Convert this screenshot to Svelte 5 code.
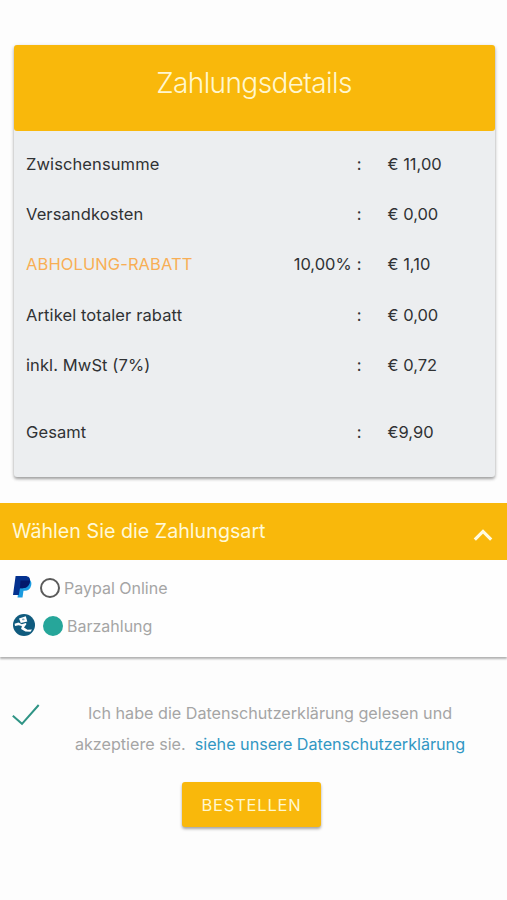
<script lang="ts">
	type Row = { label: string; percent?: string; amount: string; kind?: 'discount' | 'total' };

	const rows: Row[] = [
		{ label: 'Zwischensumme', amount: '€ 11,00' },
		{ label: 'Versandkosten', amount: '€ 0,00' },
		{ label: 'ABHOLUNG-RABATT', percent: '10,00%', amount: '€ 1,10', kind: 'discount' },
		{ label: 'Artikel totaler rabatt', amount: '€ 0,00' },
		{ label: 'inkl. MwSt (7%)', amount: '€ 0,72' },
		{ label: 'Gesamt', amount: '€9,90', kind: 'total' }
	];

	let open = $state(true);
	let method = $state('cash');
	let accepted = $state(true);
</script>

<main>
	<section class="card">
		<h1>Zahlungsdetails</h1>
		<div class="rows">
			{#each rows as row (row.label)}
				<div class="row {row.kind ?? ''}">
					<span class="label">{row.label}</span>
					<span class="percent">{row.percent ?? ''}<span class="colon">:</span></span>
					<span class="amount">{row.amount}</span>
				</div>
			{/each}
		</div>
	</section>

	<section class="payment">
		<button class="payment-header" onclick={() => (open = !open)}>
			<span>Wählen Sie die Zahlungsart</span>
			<svg class="chevron" class:closed={!open} width="20" height="14" viewBox="0 0 20 14">
				<path d="M1.8 11.6 10 3.4l8.2 8.2" fill="none" stroke="#fffbe0" stroke-width="3.2" />
			</svg>
		</button>
		{#if open}
			<div class="methods">
				<button class="method" onclick={() => (method = 'paypal')}>
					<svg width="19" height="22" viewBox="0 0 19 22">
						<path d="M7 4h9.800c1.500 1.200 1.900 3 1.400 5.200-.8 3.800-3.200 5.600-6.400 5.600h-1.300L9.500 21.500H4.500z" fill="#1a9be0" />
						<path d="M2.600 0h9.400c3.800 0 5.600 2.100 5 5.600-.8 4.600-3.600 6.600-7.500 6.600H7L5.800 19H0z" fill="#04318f" />
						<path d="M7.500 4.500h9.600c-.5 5.200-3.500 7.700-7.600 7.700H7L7.500 4.500z" fill="#03186b" />
					</svg>
					<span class="radio" class:selected={method === 'paypal'}></span>
					<span>Paypal Online</span>
				</button>
				<button class="method" onclick={() => (method = 'cash')}>
					<svg width="22" height="22" viewBox="0 0 22 22">
						<circle cx="11" cy="11" r="11" fill="#105b7e" />
						<path d="M6 4.500 12.800 2.200l1.500 5.300-6.500 1.400z" fill="#fff" />
						<ellipse cx="10.300" cy="5.400" rx="1.300" ry=".9" fill="#7fa9bd" />
						<path d="m1.600 9.800 3.900-1.300 3.300 1.700 4-1.300.7 1.100-2.500 3.600 3.500 2.100 4.500-.2-1.500 2.200-5.100-.1-4.300-2.700.8-2.800-3.400-.8-3.500.6z" fill="#fff" />
					</svg>
					<span class="radio" class:selected={method === 'cash'}></span>
					<span>Barzahlung</span>
				</button>
			</div>
		{/if}
	</section>

	<section class="consent">
		<button class="check" aria-label="Datenschutzerklärung" onclick={() => (accepted = !accepted)}>
			{#if accepted}
				<svg width="28" height="22" viewBox="0 0 28 22">
					<path d="m.8 11.800 9.200 8L26.700 1" fill="none" stroke="#2f9485" stroke-width="2" />
				</svg>
			{/if}
		</button>
		<p>
			Ich habe die Datenschutzerklärung gelesen und<br />
			akzeptiere sie.&nbsp; <a href="#datenschutz">siehe unsere Datenschutzerklärung</a>
		</p>
	</section>

	<button class="submit">BESTELLEN</button>
</main>

<style>
	:global(body) {
		margin: 0;
		background: #fdfdfd;
	}

	main {
		display: flex;
		flex-direction: column;
		box-sizing: border-box;
		height: 900px;
		padding-top: 45px;
		overflow: hidden;
		font-family: Inter, 'Liberation Sans', sans-serif;
		font-size: 16.5px;
		color: #303234;
	}

	button {
		padding: 0;
		border: 0;
		background: none;
		font: inherit;
		color: inherit;
		text-align: left;
		cursor: pointer;
	}

	svg {
		display: block;
		flex-shrink: 0;
	}

	.card {
		height: 432px;
		margin: 0 12.5px 0 13.5px;
		border-radius: 3px;
		background: #eceef0;
		box-shadow: 0 2px 3px rgba(0, 0, 0, 0.32), 0 1px 5px rgba(0, 0, 0, 0.1);
	}

	h1 {
		height: 86px;
		margin: 0;
		border-radius: 3px;
		background: #f9b80b;
		color: #fff7cf;
		font-size: 28px;
		font-weight: 300;
		letter-spacing: -0.6px;
		line-height: 77px;
		text-align: center;
	}

	.rows {
		padding: 8px 0 0 12.5px;
	}

	.row {
		display: grid;
		grid-template-columns: 200px 1fr 107px;
		align-items: center;
		height: 50.2px;
	}

	.label {
		letter-spacing: 0.1px;
	}

	.percent {
		padding-right: 26px;
		text-align: right;
	}

	.colon {
		margin-left: 5px;
	}

	.discount .label {
		color: #f8ae55;
	}

	.total {
		margin-top: 16.5px;
	}

	.payment {
		margin-top: 26px;
		box-shadow: 0 2px 2px rgba(0, 0, 0, 0.3);
	}

	.payment-header {
		display: flex;
		align-items: center;
		justify-content: space-between;
		box-sizing: border-box;
		width: 100%;
		height: 57px;
		padding: 0 14.5px 0 12px;
		background: #f9b80b;
		color: #fff9d8;
		font-size: 19.7px;
	}

	.payment-header span {
		margin-bottom: 1px;
	}

	.chevron {
		margin-top: 7px;
	}

	.chevron.closed {
		transform: rotate(180deg);
	}

	.methods {
		display: flex;
		flex-direction: column;
		box-sizing: border-box;
		height: 97px;
		padding: 9px 13px;
		background: #fefefe;
	}

	.method {
		display: flex;
		align-items: center;
		height: 38px;
		color: #a5a5a5;
		font-size: 16px;
	}

	.method svg {
		margin-bottom: 3px;
	}

	.radio {
		box-sizing: border-box;
		width: 20px;
		height: 20px;
		margin: 0 4px 0 8px;
		border: 2px solid #5a5a5a;
		border-radius: 50%;
	}

	.radio.selected {
		border-color: #26a69a;
		background: #26a69a;
	}

	.consent {
		display: flex;
		margin-top: 41px;
	}

	.check {
		width: 30px;
		height: 22px;
		margin: 6px 0 0 12px;
	}

	p {
		flex: 1;
		margin: 0 9px 0 0;
		color: #a5a5a5;
		font-size: 16.15px;
		line-height: 30.5px;
		text-align: center;
	}

	a {
		color: #3197c3;
		text-decoration: none;
	}

	.submit {
		align-self: center;
		width: 139px;
		height: 45px;
		margin: 23px 4px 0 0;
		border-radius: 3px;
		background: #f9b80b;
		box-shadow: 0 2px 3px rgba(0, 0, 0, 0.35);
		color: #fff7cf;
		letter-spacing: 0.8px;
		text-align: center;
	}
</style>
